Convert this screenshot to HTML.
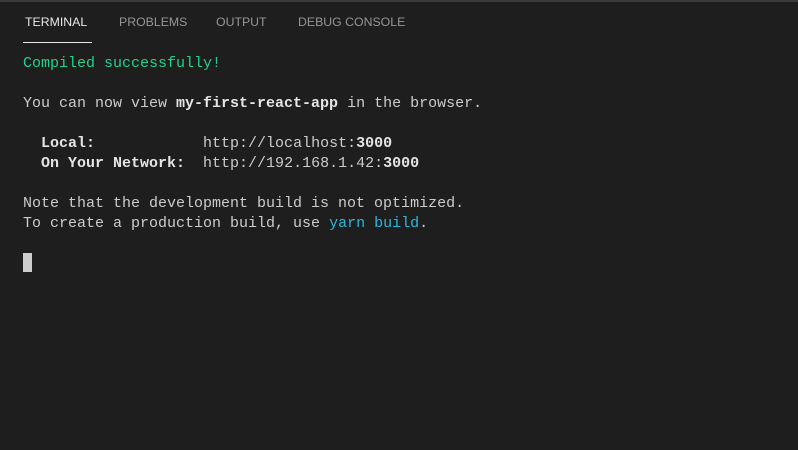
<!DOCTYPE html>
<html><head><style>
body{margin:0;width:798px;height:450px;background:#1e1e1e;overflow:hidden;position:relative}
.top{position:absolute;top:0;left:0;width:798px;height:2px;background:#3a3a3a}
.tab{position:absolute;top:15px;font:12.3px "Liberation Sans",sans-serif;color:#969696}
.t{position:absolute;left:23px;font-family:"Liberation Mono",monospace;font-size:15px;line-height:20px;color:#cccccc;white-space:pre}
b{color:#e5e5e5}
</style></head><body>
<div class="top"></div>
<div class="tab" style="left:25px;color:#e7e7e7">TERMINAL</div>
<div style="position:absolute;left:23px;top:42px;width:69px;height:1px;background:#e7e7e7"></div>
<div class="tab" style="left:119px">PROBLEMS</div>
<div class="tab" style="left:216px">OUTPUT</div>
<div class="tab" style="left:298px">DEBUG CONSOLE</div>
<div class="t" style="top:54px"><span style="color:#23d18b">Compiled successfully!</span>

You can now view <b>my-first-react-app</b> in the browser.

  <b>Local:</b>            http://localhost:<b>3000</b>
  <b>On Your Network:</b>  http://192.168.1.42:<b>3000</b>

Note that the development build is not optimized.
To create a production build, use <span style="color:#29b8db">yarn build</span>.</div>
<div style="position:absolute;left:23px;top:253px;width:9px;height:19px;background:#cccccc"></div>
</body></html>
